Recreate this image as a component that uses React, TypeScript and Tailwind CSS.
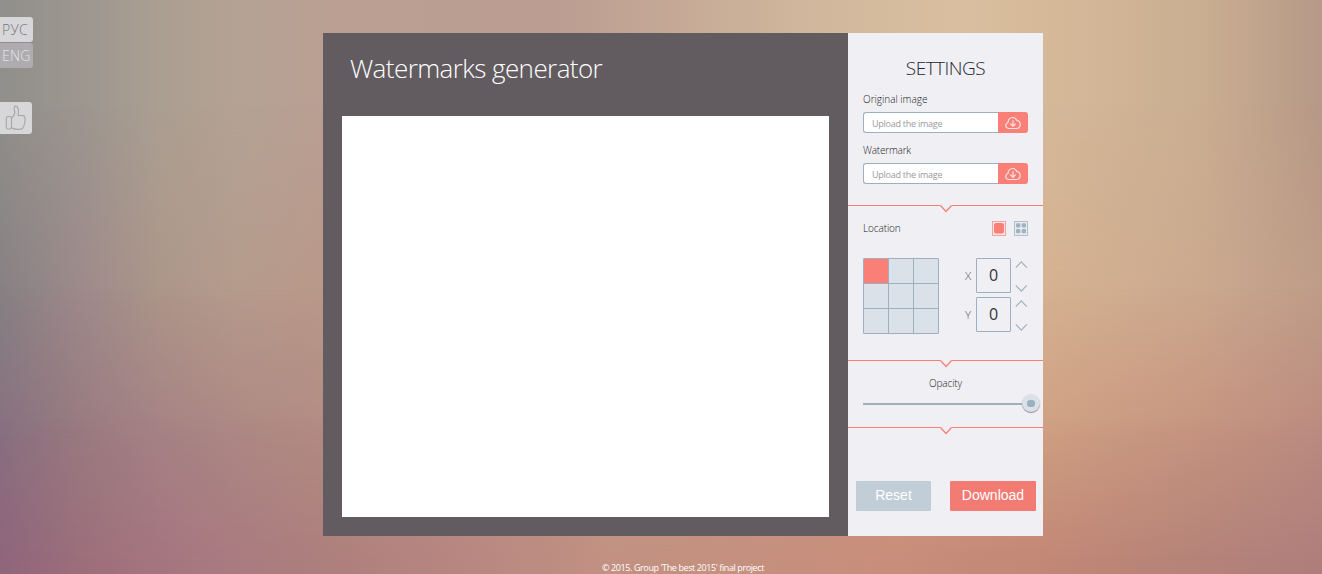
import React, { useState } from "react";

const BASE = "font-['Open_Sans','Noto_Sans',sans-serif]";

function CloudIcon() {
  return (
    <svg width="16" height="14" viewBox="0 0 16 14" fill="none" stroke="#fbe3e4" strokeWidth="1.2" strokeLinecap="round" strokeLinejoin="round">
      <path d="M4.2 12.500C2 12.500.8 11.100.8 9.400.8 7.900 1.700 6.800 3.100 6.500 2.900 3.600 5 1.500 7.600 1.500c2.100 0 3.700 1.200 4.300 3.100 2-.1 3.300 1.500 3.300 3.700 0 2.500-1.500 4.200-3.700 4.200z" />
      <path d="M8 4.600v5.400M5.700 8 8 10.200l2.300-2.200" />
    </svg>
  );
}

function ThumbIcon() {
  return (
    <svg width="22" height="26" viewBox="0 0 22 26" fill="none" stroke="#a9a9ad" strokeWidth="1.2" strokeLinejoin="round" strokeLinecap="round">
      <path d="M2.500 11.500h2.800l1.200 1.200v9.800l-1.200 1.500H2.500l-1.200-1.500v-9.800z" />
      <path d="M6.700 13c2-1.600 3.100-3.700 3-5.700l-.5-3.600C9.100 2.100 9.800 1.200 10.600 1.200c2 0 3.200 3.200 2.900 6.200l-.5 2.900 5.500.4c1.200.3 1.700 1.300 1.200 2.500.8.900.8 2.100.1 3 .5 1 .3 2-.5 2.800.2 1.300-.2 2.200-1.100 2.700-.1 1.400-.9 2.300-2.400 2.500-3.400.5-6.300.2-9.300-1.300" />
    </svg>
  );
}

function Divider() {
  return (
    <svg className="block shrink-0" width="195" height="8" viewBox="0 0 195 8" fill="none" stroke="#f87d74">
      <path d="M0 .5h92.500M103.500.5H195" />
      <path d="M92.500.5l5.500 6 5.500-6" strokeWidth="1.200" />
    </svg>
  );
}

function Upload({ label, tracking }: { label: string; tracking: string }) {
  return (
    <div className="h-[51px]">
      <div className={`h-[21px] text-[10px] leading-[16px] text-[#181c22] ${tracking}`}>{label}</div>
      <div className="flex h-[21px] w-[165px]">
        <div className="flex w-[135px] items-center rounded-l-[3px] border border-r-0 border-[#9cb0bf] bg-white pl-2 pt-[2px] text-[9px] font-medium tracking-[-0.25px] text-[#9a9a9e]">
          Upload the image
        </div>
        <button className="flex w-[30px] items-center justify-center rounded-r-[3px] bg-[#fa7f76] pt-px">
          <CloudIcon />
        </button>
      </div>
    </div>
  );
}

function Coordinate({ name }: { name: string }) {
  const [value, setValue] = useState(0);
  return (
    <div className="flex h-[35px] items-center">
      <span className="w-3 pl-px text-[11.5px] text-[#5d6064]">{name}</span>
      <div className="flex h-[35px] w-[35px] items-center justify-center rounded-[1px] border border-[#9cb0bf] pb-[2px] text-[16px] font-normal text-[#30343b]">
        {value}
      </div>
      <div className="ml-1 flex h-[35px] flex-col justify-between pb-px pt-[3px]">
        <button onClick={() => setValue(value + 1)}>
          <svg width="13" height="7" viewBox="0 0 13 7" fill="none" stroke="#9fb2c0" strokeWidth="1.200" className="block"><path d="M.8 6.600 6.300.9l5.500 5.700" /></svg>
        </button>
        <button onClick={() => setValue(value - 1)}>
          <svg width="13" height="7" viewBox="0 0 13 7" fill="none" stroke="#9fb2c0" strokeWidth="1.200" className="block"><path d="m.8.4 5.500 5.700L11.800.4" /></svg>
        </button>
      </div>
    </div>
  );
}

export default function App() {
  const [cell, setCell] = useState(0);
  return (
    <div className={`relative h-[574px] w-[1322px] overflow-hidden font-light ${BASE}`}>
      <div className="absolute inset-0 bg-[linear-gradient(90deg,#908f8b_0%,#9c968f_6%,#ab9f92_12%,#b4a294_18%,#ba9f92_25%,#bb9d91_42%,#d2b99d_63%,#d9bf9f_73%,#d5b999_79%,#caae91_91%,#b69987_100%)]" />
      <div className="absolute inset-0 bg-[linear-gradient(90deg,#868083_0%,#9d898a_6%,#ac9589_12%,#b59b8b_18%,#b99889_25%,#c39b8a_45%,#cfa88c_65%,#d5b191_79%,#cba88e_91%,#bf9c88_100%)] [mask-image:linear-gradient(180deg,transparent_18%,black_53%)]" />
      <div className="absolute inset-0 bg-[linear-gradient(90deg,#87707f_0%,#987a80_6%,#a58284_12%,#ad8884_18%,#b38c82_25%,#c09384_45%,#c9977f_65%,#cfa083_79%,#c6947f_91%,#bb8b80_100%)] [mask-image:linear-gradient(180deg,transparent_50%,black_76%)]" />
      <div className="absolute inset-0 bg-[linear-gradient(90deg,#8f657b_0%,#9c6e7b_6%,#a5757f_12%,#a97b80_18%,#ad7f7d_25%,#b98881_37%,#c29182_46%,#c88e7a_68%,#c28775_79%,#b68378_89%,#ae7e7b_100%)] [mask-image:linear-gradient(180deg,transparent_73%,black_98%)]" />

      <div className="relative flex h-[574px]">
        <aside className="flex w-[323px] shrink-0 flex-col items-start pt-[17px] text-[14px] leading-[25px]">
          <button className="h-[25px] w-[33px] rounded-r-[3px] bg-[#d7d6d9] pl-[2px] text-left tracking-[0.3px] text-[#75777b]">РУС</button>
          <button className="mt-px h-[25px] w-[33px] rounded-r-[3px] bg-[#afacb0] pl-[2px] text-left tracking-[0.2px] text-[#e4e4e6]">ENG</button>
          <button className="mt-[34px] flex h-8 w-8 items-center justify-center rounded-r-[3px] bg-[#d7d6d9]">
            <ThumbIcon />
          </button>
        </aside>

        <div className="flex w-[720px] shrink-0 flex-col pt-[33px]">
          <main className="flex h-[503px] shrink-0">
            <section className="w-[525px] bg-[#625c60] px-[19px]">
              <h1 className="h-[83px] pl-2 pt-[17px] text-[26px] leading-[36px] tracking-[-0.58px] text-white">Watermarks generator</h1>
              <div className="h-[401px] bg-white" />
            </section>

            <section className="flex w-[195px] flex-col bg-[#f0eff4]">
              <h2 className="h-[58px] pt-[21px] text-center text-[19px] leading-[28px] tracking-[-0.5px] text-[#22272d]">SETTINGS</h2>
              <div className="h-[114px] px-[15px]">
                <Upload label="Original image" tracking="tracking-[0px]" />
                <Upload label="Watermark" tracking="tracking-[-0.2px]" />
              </div>

              <Divider />
              <div className="h-[147px] px-[15px] pt-2">
                <div className="flex h-[15px] items-center">
                  <span className="text-[10px] tracking-[-0.1px] text-[#181c22]">Location</span>
                  <button className="ml-auto">
                    <svg width="14" height="15" viewBox="0 0 14 15" className="block">
                      <rect x=".5" y=".5" width="13" height="14" fill="#f3e7eb" stroke="#f9a19d" />
                      <rect x="2" y="2" width="10" height="10.500" rx="2" fill="#fa7f76" />
                    </svg>
                  </button>
                  <button className="ml-2">
                    <svg width="14" height="15" viewBox="0 0 14 15" className="block">
                      <rect x=".5" y=".5" width="13" height="14" fill="#e7ebf0" stroke="#b0c0cc" />
                      <g fill="#9fb2c0">
                        <rect x="2" y="2.200" width="4.300" height="4.300" rx="1.200" />
                        <rect x="7.700" y="2.200" width="4.300" height="4.300" rx="1.200" />
                        <rect x="2" y="8" width="4.300" height="4.300" rx="1.200" />
                        <rect x="7.700" y="8" width="4.300" height="4.300" rx="1.200" />
                      </g>
                    </svg>
                  </button>
                </div>
                <div className="mt-[22px] flex justify-between">
                  <div className="grid h-[76px] w-[76px] grid-cols-3 gap-px rounded-[1px] border border-[#9cb0bf] bg-[#9cb0bf]">
                    {Array.from({ length: 9 }, (_, i) => (
                      <button key={i} onClick={() => setCell(i)} className={i === cell ? "bg-[#fa7f76]" : "bg-[#dae1e8]"} />
                    ))}
                  </div>
                  <div className="flex flex-col gap-1">
                    <Coordinate name="X" />
                    <Coordinate name="Y" />
                  </div>
                </div>
              </div>

              <Divider />
              <div className="h-[59px] px-[15px] pt-[7px]">
                <div className="text-center text-[10px] leading-4 tracking-[-0.1px] text-[#181c22]">Opacity</div>
                <div className="mt-[3px] flex h-5 w-[177px] items-center">
                  <div className="h-0.5 w-[159px] bg-[#9cb0bf]" />
                  <div className="mb-0.5 flex h-[18px] w-[18px] shrink-0 items-center justify-center rounded-full bg-[#dae1e8] shadow-[0_1px_1px_#8b8e95]">
                    <div className="h-[7px] w-2 rounded-[3px] bg-[#9cb0bf]" />
                  </div>
                </div>
              </div>

              <Divider />
              <div className="flex justify-between pl-2 pr-[7px] pt-[46px] font-['Liberation_Sans',sans-serif] text-[14px] font-normal leading-[28px] text-white">
                <button className="h-[30px] w-[75px] rounded-[1px] bg-[#c1ced8] pb-[2px]">Reset</button>
                <button className="h-[30px] w-[86px] rounded-[1px] bg-[#f27b73] pb-[2px]">Download</button>
              </div>
            </section>
          </main>
          <footer className="mt-[25px] text-center text-[9px] font-medium leading-[14px] tracking-[-0.4px] text-white">© 2015. Group 'The best 2015' final project</footer>
        </div>
      </div>
    </div>
  );
}
